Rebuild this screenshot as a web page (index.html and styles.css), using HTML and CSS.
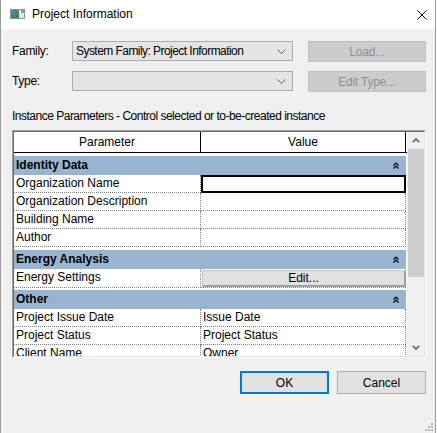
FILE: index.html
```html
<!DOCTYPE html>
<html>
<head>
<meta charset="utf-8">
<title>Project Information</title>
<link rel="stylesheet" href="styles.css">
</head>
<body>
<div class="window">
  <div class="titlebar">
    <svg class="app-icon" width="15" height="10" viewBox="0 0 15 10">
      <defs>
        <linearGradient id="ig" x1="0" y1="0" x2="1" y2="1">
          <stop offset="0" stop-color="#5a8fb5"/>
          <stop offset="1" stop-color="#2f7d4f"/>
        </linearGradient>
      </defs>
      <rect x="0.5" y="0.5" width="14" height="9" fill="#e4e4e4" stroke="#8f8f8f"/>
      <rect x="1" y="1" width="8" height="8" fill="url(#ig)"/>
      <rect x="11" y="1" width="3" height="3" fill="#6aa6d8"/>
    </svg>
    <span class="title">Project Information</span>
    <svg class="close" width="10" height="10" viewBox="0 0 10 10">
      <path d="M0.5 0.5 L9.5 9.5 M9.5 0.5 L0.5 9.5" stroke="#000" stroke-width="1" fill="none"/>
    </svg>
  </div>

  <div class="content">
    <div class="form">
      <span class="label">Family:</span>
      <div class="combo">
        <span class="combo-text">System Family: Project Information</span>
        <svg class="chev" width="9" height="5" viewBox="0 0 9 5"><path d="M0.5 0.5 L4.5 4.5 L8.5 0.5" stroke="#606060" fill="none"/></svg>
      </div>
      <button class="btn btn-disabled">Load...</button>

      <span class="label">Type:</span>
      <div class="combo">
        <span class="combo-text"></span>
        <svg class="chev" width="9" height="5" viewBox="0 0 9 5"><path d="M0.5 0.5 L4.5 4.5 L8.5 0.5" stroke="#606060" fill="none"/></svg>
      </div>
      <button class="btn btn-disabled">Edit Type...</button>
    </div>

    <div class="caption">Instance Parameters - Control selected or to-be-created instance</div>

    <div class="frame">
      <div class="frame-inner">
        <div class="pg">
          <div class="pg-head">
            <div class="ph ph-param">Parameter</div>
            <div class="ph ph-value">Value</div>
          </div>

          <div class="cat">
            <div class="cat-bar"><span>Identity Data</span>
              <svg class="dchev" width="6" height="7" viewBox="0 0 6 7"><path d="M0.5 3.5 L3 1 L5.5 3.5 M0.5 6.5 L3 4 L5.5 6.5" stroke="#000" stroke-width="1.2" fill="none"/></svg>
            </div>
          </div>
          <div class="row"><div class="cell cell-param">Organization Name</div><div class="cell cell-value editing"></div></div>
          <div class="row"><div class="cell cell-param">Organization Description</div><div class="cell cell-value"></div></div>
          <div class="row"><div class="cell cell-param">Building Name</div><div class="cell cell-value"></div></div>
          <div class="row"><div class="cell cell-param">Author</div><div class="cell cell-value"></div></div>

          <div class="cat">
            <div class="cat-bar"><span>Energy Analysis</span>
              <svg class="dchev" width="6" height="7" viewBox="0 0 6 7"><path d="M0.5 3.5 L3 1 L5.5 3.5 M0.5 6.5 L3 4 L5.5 6.5" stroke="#000" stroke-width="1.2" fill="none"/></svg>
            </div>
          </div>
          <div class="row row-tall"><div class="cell cell-param">Energy Settings</div><div class="cell cell-value cell-btn"><div class="edit-btn">Edit...</div></div></div>

          <div class="cat cat-tight">
            <div class="cat-bar"><span>Other</span>
              <svg class="dchev" width="6" height="7" viewBox="0 0 6 7"><path d="M0.5 3.5 L3 1 L5.5 3.5 M0.5 6.5 L3 4 L5.5 6.5" stroke="#000" stroke-width="1.2" fill="none"/></svg>
            </div>
          </div>
          <div class="row"><div class="cell cell-param">Project Issue Date</div><div class="cell cell-value">Issue Date</div></div>
          <div class="row"><div class="cell cell-param">Project Status</div><div class="cell cell-value">Project Status</div></div>
          <div class="row"><div class="cell cell-param">Client Name</div><div class="cell cell-value">Owner</div></div>
        </div>

        <div class="sb">
          <div class="sb-arrow">
            <svg width="8" height="5" viewBox="0 0 8 5"><path d="M0.8 4.2 L4 1 L7.2 4.2" stroke="#606060" stroke-width="1.6" fill="none"/></svg>
          </div>
          <div class="sb-thumb"></div>
          <div class="sb-track"></div>
          <div class="sb-arrow">
            <svg width="8" height="5" viewBox="0 0 8 5"><path d="M0.8 0.8 L4 4 L7.2 0.8" stroke="#606060" stroke-width="1.6" fill="none"/></svg>
          </div>
        </div>
      </div>
    </div>

    <div class="actions">
      <button class="btn btn-primary">OK</button>
      <button class="btn btn-normal">Cancel</button>
    </div>
  </div>

  <svg class="grip" width="9" height="9" viewBox="0 0 9 9">
    <rect x="6" y="0" width="2" height="2" fill="#b9b9b9"/>
    <rect x="3" y="3" width="2" height="2" fill="#b9b9b9"/>
    <rect x="6" y="3" width="2" height="2" fill="#b9b9b9"/>
    <rect x="0" y="6" width="2" height="2" fill="#b9b9b9"/>
    <rect x="3" y="6" width="2" height="2" fill="#b9b9b9"/>
    <rect x="6" y="6" width="2" height="2" fill="#b9b9b9"/>
  </svg>
</div>
</body>
</html>
```

FILE: styles.css
```css
* { box-sizing: border-box; }
html, body { margin: 0; padding: 0; background: #ffffff; }
body {
  font-family: "Liberation Sans", Arial, sans-serif;
  font-size: 12px;
  color: #000;
}

.window {
  width: 436px;
  height: 433px;
  border-left: 1px solid #9b9b9b;
  border-right: 1px solid #9b9b9b;
  background: #f0f0f0;
  display: flex;
  flex-direction: column;
  position: relative;
}

.titlebar {
  height: 29px;
  flex-shrink: 0;
  background: #ffffff;
  display: flex;
  align-items: center;
  padding-left: 9px;
}
.app-icon { display: block; margin-top: -1px; }
.title { margin-left: 7px; font-size: 12px; line-height: 15px; }
.close { display: block; margin-left: auto; margin-right: 8px; }

.content {
  flex: 1;
  display: flex;
  flex-direction: column;
  padding: 12px 9px 0 11px;
}

.form {
  display: grid;
  grid-template-columns: 60px 221px 1fr;
  grid-auto-rows: 21px;
  row-gap: 9px;
  align-items: start;
}
.label { line-height: 20px; letter-spacing: -0.3px; }
.combo {
  height: 20px;
  border: 1px solid #acacac;
  background: #e5e5e5;
  display: flex;
  align-items: center;
  padding: 0 6px 0 3px;
}
.combo-text { flex: 1; line-height: 18px; white-space: nowrap; letter-spacing: -0.55px; }
.chev { display: block; }

.btn {
  font-family: inherit;
  font-size: 12px;
  margin: 0;
  padding: 0;
  text-align: center;
}
.btn-disabled {
  justify-self: end;
  width: 118px;
  height: 21px;
  background: #cccccc;
  border: 1px solid #bfbfbf;
  color: #8f8f8f;
  letter-spacing: -0.2px;
}

.caption {
  margin-top: 17px;
  line-height: 15px;
  white-space: nowrap;
  letter-spacing: -0.5px;
}

.frame {
  margin-top: 6px;
  height: 228px;
  border-style: solid;
  border-width: 1px;
  border-color: #a0a0a0 #ffffff #ffffff #a0a0a0;
}
.frame-inner {
  height: 100%;
  border-style: solid;
  border-width: 1px;
  border-color: #696969 #e3e3e3 #e3e3e3 #696969;
  display: flex;
}

.pg {
  width: 393px;
  height: 100%;
  overflow: hidden;
  background: #ffffff;
}
.pg-head {
  display: flex;
  height: 21px;
  border-bottom: 1px solid #000;
  background: #ffffff;
}
.ph {
  text-align: center;
  line-height: 20px;
  border-right: 1px solid #000;
}
.ph-param { width: 187px; }
.ph-value { width: 205px; }

.cat { padding-top: 3px; }
.cat-tight { padding-top: 2px; }
.cat-bar {
  width: 392px;
  height: 19px;
  background: #99b4d1;
  display: flex;
  align-items: center;
  justify-content: space-between;
  padding: 0 7px 0 2px;
  font-weight: bold;
  line-height: 19px;
}
.dchev { display: block; }

.row {
  display: flex;
  height: 18px;
}
.row-tall { height: 19px; }
.cell {
  height: 100%;
  line-height: 17px;
  border-bottom: 1px dotted #808080;
  border-right: 1px dotted #808080;
  white-space: nowrap;
  overflow: hidden;
}
.cell-param { width: 187px; padding-left: 2px; }
.cell-value { width: 205px; padding-left: 2px; }
.cell-value.editing { border: 2px solid #000; }
.cell-btn { padding: 1px 0 0 1px; border-right: none; }
.edit-btn {
  height: 17px;
  background: #e1e1e1;
  border-top: 1px solid #c8c8c8;
  border-left: 1px solid #c8c8c8;
  border-right: 2px solid #a0a0a0;
  border-bottom: 2px solid #a0a0a0;
  text-align: center;
  line-height: 14px;
}

.sb {
  width: 17px;
  margin-left: auto;
  background: #f0f0f0;
  display: flex;
  flex-direction: column;
}
.sb-arrow {
  height: 17px;
  display: flex;
  align-items: center;
  justify-content: center;
}
.sb-arrow svg { display: block; }
.sb-thumb {
  height: 128px;
  margin-left: 1px;
  background: #cdcdcd;
}
.sb-track { flex: 1; }

.actions {
  margin-top: 13px;
  display: flex;
  justify-content: flex-end;
  gap: 8px;
}
.btn-primary,
.btn-normal {
  width: 89px;
  height: 23px;
  background: #e1e1e1;
  color: #000;
}
.btn-primary { border: 2px solid #0078d7; }
.btn-normal { border: 1px solid #adadad; }

.grip {
  position: absolute;
  right: 1px;
  bottom: 1px;
  display: block;
}
```
